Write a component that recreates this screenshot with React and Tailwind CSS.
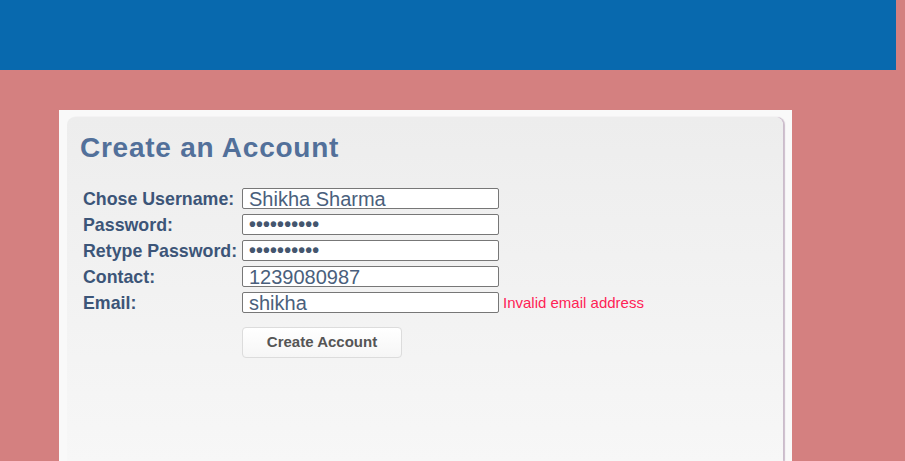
export default function App() {
  const rows = [
    { label: "Chose Username:", value: "Shikha Sharma", type: "text" },
    { label: "Password:", value: "••••••••••", type: "pw" },
    { label: "Retype Password:", value: "••••••••••", type: "pw" },
    { label: "Contact:", value: "1239080987", type: "text" },
    { label: "Email:", value: "shikha", type: "text", error: "Invalid email address" },
  ];
  return (
    <div className="h-[461px] w-[905px] overflow-hidden bg-[#d48080]" style={{ fontFamily: '"Liberation Sans", Arial, sans-serif' }}>
      <div className="h-[70px] w-[896px] bg-[#0869ae]" />
      <div className="ml-[59px] mt-[40px] h-[351px] w-[733px] bg-[#f9f9f9] pl-[8px] pr-[9px] pt-[7px]">
        <div className="h-full rounded-t-[8px] bg-gradient-to-b from-[#ededed] to-[#f7f7f7] shadow-[2px_0_1px_#cbbccb] pl-[13px] pt-[15px]">
          <h1 className="text-[28px] font-bold leading-[32px] tracking-[0.75px] text-[#52709a]">Create an Account</h1>
          <div className="mt-[24px] flex flex-col gap-[5px] pl-[3px]">
            {rows.map((r) => (
              <div key={r.label} className="flex h-[21px] items-center">
                <div className="w-[159px] whitespace-nowrap pt-[2px] text-[17.8px] font-bold leading-none text-[#3c5578]">{r.label}</div>
                <div className="flex h-[21px] w-[257px] items-center overflow-hidden rounded-[2px] border border-[#777] bg-white pl-[6px]">
                  {r.type === "pw" ? (
                    <span className="text-[19.5px] font-bold leading-none tracking-[0.2px] text-[#44566e]">{r.value}</span>
                  ) : (
                    <span className="text-[20px] leading-none text-[#4a5f7c]">{r.value}</span>
                  )}
                </div>
                {r.error && <span className="ml-[4px] text-[15px] leading-none text-[#ff2255]">{r.error}</span>}
              </div>
            ))}
          </div>
          <div className="mt-[14px] pl-[162px]">
            <button className="h-[31px] w-[160px] rounded-[4px] border border-[#dcdcdc] bg-gradient-to-b from-white to-[#f6f6f6] text-[15px] font-bold text-[#555]">
              Create Account
            </button>
          </div>
        </div>
      </div>
    </div>
  );
}
